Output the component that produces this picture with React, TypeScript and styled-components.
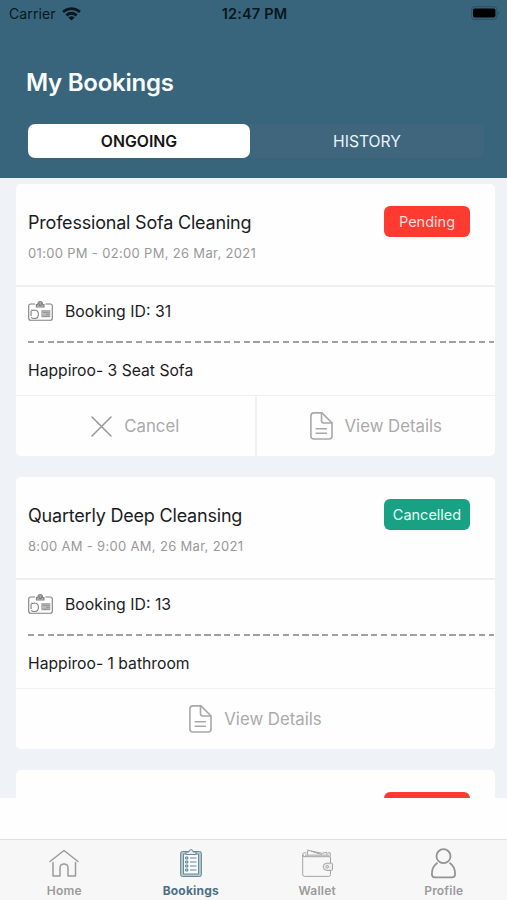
import React from "react";
import styled, { createGlobalStyle } from "styled-components";

const GlobalStyle = createGlobalStyle`
  * { box-sizing: border-box; }
  body { margin: 0; background: #fefefe; font-family: Inter, "Liberation Sans", sans-serif; color: #1c1c1e; }
  svg { display: block; flex: none; overflow: visible; }
`;

const Screen = styled.div`
  width: 507px;
  height: 900px;
  display: flex;
  flex-direction: column;
  overflow: hidden;
  background: #fefefe;
`;

const Header = styled.header`
  height: 178px;
  flex: none;
  background: #38657c;
`;

const StatusBar = styled.div`
  height: 28px;
  padding: 0 7px 0 9px;
  display: grid;
  grid-template-columns: 1fr auto 1fr;
  align-items: center;
  color: #071820;
  font-size: 14px;
  line-height: 28px;
`;

const Carrier = styled.div`
  display: flex;
  align-items: center;
  gap: 6px;
  letter-spacing: 0.1px;
`;

const Clock = styled.div`
  font-weight: 600;
  font-size: 14.5px;
  letter-spacing: 0.15px;
`;

const BatterySlot = styled.div`
  display: flex;
  justify-content: flex-end;
  margin-top: -2px;
`;

const Title = styled.h1`
  margin: 37px 0 0 26px;
  font-size: 24px;
  line-height: 36px;
  font-weight: 600;
  letter-spacing: -0.25px;
  color: #fafdff;
`;

const Segments = styled.div`
  margin: 23px 23px 0 28px;
  height: 34px;
  display: grid;
  grid-template-columns: 222px 1fr;
`;

const Segment = styled.button<{ $active?: boolean }>`
  border: 0;
  padding: 1px 0 0;
  border-radius: ${(p) => (p.$active ? "7px" : "0 7px 7px 0")};
  background: ${(p) => (p.$active ? "#fff" : "#3f667d")};
  color: ${(p) => (p.$active ? "#151515" : "#eaf4fb")};
  font: ${(p) => (p.$active ? "600 15.8px" : "400 15.7px")}/33px Inter, sans-serif;
`;

const List = styled.main`
  height: 620px;
  flex: none;
  padding: 6px 12px 0 16px;
  display: flex;
  flex-direction: column;
  gap: 21px;
  overflow: hidden;
  background: #eff3f7;
`;

const Card = styled.article`
  flex: none;
  height: 272.2px;
  border-radius: 5px;
  background: #fefefe;
  display: flex;
  flex-direction: column;
`;

const Summary = styled.div`
  height: 103px;
  padding: 22px 25px 0 12px;
  display: flex;
  justify-content: space-between;
  align-items: flex-start;
  border-bottom: 2px solid #eeeff1;
`;

const Service = styled.h2`
  margin: 5px 0 0;
  font-size: 18px;
  line-height: 24px;
  font-weight: 400;
  letter-spacing: -0.2px;
  white-space: nowrap;
`;

const Time = styled.p`
  margin: 8px 0 0;
  font-size: 13px;
  line-height: 20px;
  letter-spacing: 0.32px;
  color: #999;
`;

const Badge = styled.span<{ $tone: "red" | "green" }>`
  width: 86px;
  height: 31px;
  border-radius: 6px;
  text-align: center;
  font-size: 14.5px;
  line-height: 31px;
  color: ${(p) => (p.$tone === "red" ? "#ffdeda" : "#e2fff5")};
  background: ${(p) => (p.$tone === "red" ? "#fe3a31" : "#18a283")};
`;

const BookingRow = styled.div`
  height: 54px;
  padding: 0 0 6px 12px;
  display: flex;
  align-items: center;
  gap: 12px;
  font-size: 15.8px;
`;

const Dashes = styled.div`
  height: 2px;
  margin: 0 1px 0 12px;
  background: repeating-linear-gradient(90deg, #a0a0a0 0 6.4px, transparent 6.4px 9.8px);
`;

const Item = styled.div`
  height: 52px;
  padding-left: 12px;
  font-size: 15.7px;
  line-height: 56px;
`;

const Actions = styled.div`
  flex: 1;
  display: flex;
  border-top: 1px solid #f0f1f2;
`;

const Action = styled.button`
  flex: 1;
  padding: 0;
  border: 0;
  background: none;
  display: flex;
  align-items: center;
  justify-content: center;
  gap: 12px;
  color: #aaa;
  font: 400 16.8px/24px Inter, sans-serif;

  & + & { border-left: 2px solid #f0f1f3; }
`;

const TabBar = styled.nav`
  height: 61px;
  margin-top: auto;
  flex: none;
  padding-left: 1px;
  border-top: 1px solid #dedfe0;
  background: #f7f7f8;
  display: grid;
  grid-template-columns: repeat(4, 126.5px);
`;

const Tab = styled.a<{ $active?: boolean }>`
  display: flex;
  flex-direction: column;
  align-items: center;
  padding-top: 9px;
  gap: 5px;
  color: ${(p) => (p.$active ? "#4c7084" : "#9b9b9b")};
  font-size: 12px;
  line-height: 16px;
  font-weight: ${(p) => (p.$active ? 700 : 600)};
  letter-spacing: 0.2px;
`;

const WifiIcon = () => (
  <svg width="19" height="14" viewBox="0 0 19 14" fill="none" stroke="#071820" strokeWidth="2.8">
    <path d="M1 4.8Q9.5-1.5 18 4.8" />
    <path d="M4.3 8.4Q9.5 4.2 14.7 8.4" />
    <path d="M9.5 13.6 6.3 10.5Q9.5 8 12.7 10.5Z" fill="#071820" stroke="none" />
  </svg>
);

const BatteryIcon = () => (
  <svg width="29" height="14" viewBox="0 0 29 14">
    <rect x=".6" y=".6" width="25.2" height="12.8" rx="3.5" fill="none" stroke="#2c5468" strokeWidth="1.2" />
    <rect x="2" y="2.5" width="22.4" height="9" rx="1.8" fill="#000" />
    <path d="M27 5.5q2 1.5 0 3" fill="#24485b" />
  </svg>
);

const IdIcon = () => (
  <svg width="25" height="20" viewBox="0 0 25 20" fill="none" stroke="#808080" strokeWidth="1.1">
    <path d="M7 3H2.8Q.7 3 .7 5v12q0 2.3 2.1 2.3h19.4q2.1 0 2.1-2.3V5q0-2-2.1-2H17.5" />
    <path d="M8.4 6V3.6h1.4q0-3 2.4-3t2.4 3H16V6Z" fill="#c5c5c5" />
    <path d="M11.2 2v2.4h2V2" />
    <path d="M3 9q1.8.7 3.4 0 4 .2 4 4.2 0 4.3-4 4.3-2 0-3.4-1.2M3.1 10v5" />
    <path d="M13.8 9.6h8v6.2h-8Z" fill="#bbb" stroke="#b0b0b0" />
    <path d="M14.5 11.3h7M18 13.3h3.5M14.5 15.3h7" stroke="#909090" />
  </svg>
);

const CrossIcon = () => (
  <svg width="21" height="21" viewBox="0 0 21 21" fill="none" stroke="#999" strokeWidth="1.6" strokeLinecap="round">
    <path d="m1 1 19 19M20 1 1 20" />
  </svg>
);

const FileIcon = () => (
  <svg width="23" height="28" viewBox="0 0 23 28" fill="none" stroke="#a8a8a8" strokeWidth="1.6" strokeLinejoin="round" strokeLinecap="round">
    <path d="M4 .9h8L22 11v13q0 3-3 3H4q-3.1 0-3.1-3V4Q.9.9 4 .9Z" />
    <path d="M11.5 1v7.5q0 2.5 2.5 2.5h8M6.2 16.7h10.2M6.2 21.3h10.2" />
  </svg>
);

const HomeIcon = () => (
  <svg width="30" height="29" viewBox="0 0 30 29" fill="none" stroke="#9b9b9b" strokeWidth="1.5" strokeLinecap="round" strokeLinejoin="round">
    <path d="M1 12.5 15 1.5 29 12.5M4 13.5V27h7v-8q0-4 4-4t4 4v8h7.5V13.5" />
  </svg>
);

const ClipboardIcon = () => (
  <svg width="22" height="29" viewBox="0 0 22 29" fill="none" stroke="#6b8899" strokeWidth="1">
    <rect x=".6" y="2.5" width="20.8" height="25" rx="1.8" fill="#b5c8d2" />
    <path d="M3.5 5h15v20h-15Z" fill="#f7fafb" />
    <path d="M6 5.5V3h2.8Q9 .6 11 .6T13.2 3H16v2.5Z" fill="#e2ebef" />
    <path d="M10 9h6.5M10 13h6.5M10 17h6.5M10 21h6.5" stroke="#6a8797" />
    <path d="M5.7 8h2.1v2H5.7ZM5.7 12h2.1v2H5.7ZM5.7 16h2.1v2H5.7ZM5.7 20h2.1v2H5.7Z" stroke="#587a8c" />
  </svg>
);

const WalletIcon = () => (
  <svg width="31" height="29" viewBox="0 0 31 29" fill="none" stroke="#a3a3a3" strokeWidth="1" strokeLinejoin="round">
    <path d="M28.5 14V9q0-1.3-1.5-1.3H3Q.7 7.7.7 5.7v19.5q0 2.2 2 2.2h24q1.8 0 1.8-1.8V21" />
    <path d="M4.5 3.8H2.7q-2 0-2 1.8t2 2.1M5.3 7.2 5.8 1 20 5.8M9 2l11 2.3 4.5-1 .8 3.5M25.5 3.8h2.7v4" />
    <path d="M3 6.2h24" strokeWidth="1.4" stroke="#bdbdbd" />
    <path d="M29.5 14.2H25q-3.8 0-3.8 3.6t3.8 3.6h4.5q1 0 1-1v-5.2q0-1-1-1Z" fill="#eee" />
    <circle cx="25.2" cy="17.8" r="1.3" />
  </svg>
);

const ProfileIcon = () => (
  <svg width="25" height="29" viewBox="0 0 25 29" fill="none" stroke="#939393" strokeWidth="1.8">
    <circle cx="12.5" cy="7.2" r="7" />
    <path d="M6.5 13.8Q.9 17.5.9 25q0 3.4 3.4 3.4h16.4q3.4 0 3.4-3.4 0-7.5-5.6-11.2" />
  </svg>
);

type Booking = {
  service: string;
  time: string;
  status: string;
  tone: "red" | "green";
  id?: number;
  item?: string;
  cancellable?: boolean;
};

const bookings: Booking[] = [
  { service: "Professional Sofa Cleaning", time: "01:00 PM - 02:00 PM, 26 Mar, 2021", status: "Pending", tone: "red", id: 31, item: "Happiroo- 3 Seat Sofa", cancellable: true },
  { service: "Quarterly Deep Cleansing", time: "8:00 AM - 9:00 AM, 26 Mar, 2021", status: "Cancelled", tone: "green", id: 13, item: "Happiroo- 1 bathroom" },
];

const BookingCard = ({ booking }: { booking: Booking }) => (
  <Card>
    <Summary>
      <div>
        <Service>{booking.service}</Service>
        <Time>{booking.time}</Time>
      </div>
      <Badge $tone={booking.tone}>{booking.status}</Badge>
    </Summary>
    <BookingRow><IdIcon /><span>Booking ID: {booking.id}</span></BookingRow>
    <Dashes />
    <Item>{booking.item}</Item>
    <Actions>
      {booking.cancellable && <Action><CrossIcon />Cancel</Action>}
      <Action><FileIcon />View Details</Action>
    </Actions>
  </Card>
);

export default function App() {
  return (
    <>
      <GlobalStyle />
      <Screen>
        <Header>
          <StatusBar>
            <Carrier>Carrier <WifiIcon /></Carrier>
            <Clock>12:47 PM</Clock>
            <BatterySlot><BatteryIcon /></BatterySlot>
          </StatusBar>
          <Title>My Bookings</Title>
          <Segments>
            <Segment $active>ONGOING</Segment>
            <Segment>HISTORY</Segment>
          </Segments>
        </Header>
        <List>
          {bookings.map((b) => <BookingCard key={b.id} booking={b} />)}
          <Card>
            <Summary><div /><Badge $tone="red" /></Summary>
          </Card>
        </List>
        <TabBar>
          <Tab><HomeIcon />Home</Tab>
          <Tab $active><ClipboardIcon />Bookings</Tab>
          <Tab><WalletIcon />Wallet</Tab>
          <Tab><ProfileIcon />Profile</Tab>
        </TabBar>
      </Screen>
    </>
  );
}
